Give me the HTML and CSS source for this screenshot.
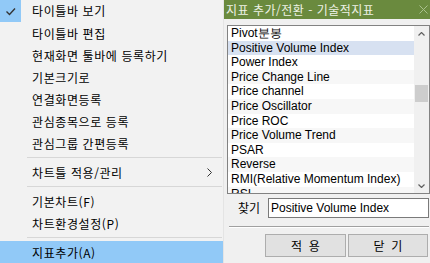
FILE: index.html
```html
<!DOCTYPE html>
<html lang="ko">
<head>
  <meta charset="UTF-8">
  <title>지표 추가/전환</title>
  <link rel="stylesheet" href="styles.css">
</head>
<body>

  <div class="menu">
    <div class="menu-item checked">
      <span class="check-box">
        <svg width="21" height="22" viewBox="0 0 21 22"><polyline points="6.5,11.5 9.5,14.5 15,8.5" fill="none" stroke="#333" stroke-width="1.4"/></svg>
      </span>
      타이틀바 보기
    </div>
    <div class="menu-item">타이틀바 편집</div>
    <div class="menu-item">현재화면 툴바에 등록하기</div>
    <div class="menu-item">기본크기로</div>
    <div class="menu-item">연결화면등록</div>
    <div class="menu-item">관심종목으로 등록</div>
    <div class="menu-item">관심그룹 간편등록</div>
    <div class="menu-sep"></div>
    <div class="menu-item">
      차트틀 적용/관리
      <svg class="sub-arrow" width="5" height="9" viewBox="0 0 5 9"><polyline points="0.5,0.5 4.5,4.5 0.5,8.5" fill="none" stroke="#333" stroke-width="1"/></svg>
    </div>
    <div class="menu-sep"></div>
    <div class="menu-item">기본차트(F)</div>
    <div class="menu-item">차트환경설정(P)</div>
    <div class="menu-sep"></div>
    <div class="menu-item active">지표추가(A)</div>
  </div>

  <div class="dialog">
    <div class="title-bar">
      <span class="title">지표 추가/전환 - 기술적지표</span>
      <svg class="close" width="9" height="9" viewBox="0 0 9 9"><path d="M0.5 0.5 L8.5 8.5 M8.5 0.5 L0.5 8.5" stroke="#a9c08c" stroke-width="1"/></svg>
    </div>

    <div class="dialog-body">
      <div class="listbox">
        <ul class="list">
          <li>Pivot분봉</li>
          <li class="selected">Positive Volume Index</li>
          <li>Power Index</li>
          <li>Price Change Line</li>
          <li>Price channel</li>
          <li>Price Oscillator</li>
          <li>Price ROC</li>
          <li>Price Volume Trend</li>
          <li>PSAR</li>
          <li>Reverse</li>
          <li>RMI(Relative Momentum Index)</li>
          <li>RSI</li>
        </ul>
        <div class="scrollbar">
          <div class="scroll-btn">
            <svg width="7" height="4" viewBox="0 0 7 4"><polyline points="0.5,3.5 3.5,0.5 6.5,3.5" fill="none" stroke="#606060" stroke-width="1.2"/></svg>
          </div>
          <div class="scroll-track"><div class="scroll-thumb"></div></div>
          <div class="scroll-btn">
            <svg width="7" height="4" viewBox="0 0 7 4"><polyline points="0.5,0.5 3.5,3.5 6.5,0.5" fill="none" stroke="#606060" stroke-width="1.2"/></svg>
          </div>
        </div>
      </div>

      <div class="search-row">
        <label class="search-label" for="search">찾기</label>
        <input class="search-input" id="search" type="text" value="Positive Volume Index">
      </div>

      <div class="divider"></div>

      <div class="buttons">
        <button class="btn btn-apply">적&nbsp;&nbsp;용</button>
        <button class="btn btn-close">닫&nbsp;&nbsp;기</button>
      </div>
    </div>
  </div>

</body>
</html>
```

FILE: styles.css
```css
* {
  box-sizing: border-box;
}

body {
  margin: 0;
  height: 263px;
  display: flex;
  background: #f0f0f0;
  font-family: "Noto Sans CJK KR", sans-serif;
  font-size: 12px;
  color: #000;
  overflow: hidden;
}

/* context menu */
.menu {
  width: 224px;
  flex-shrink: 0;
  display: flex;
  flex-direction: column;
  background: #f2f2f2;
  border-right: 1px solid #e4e4e4;
}

.menu-item {
  height: 22px;
  display: flex;
  align-items: center;
  padding-left: 32px;
  padding-top: 1px;
  line-height: 1;
  letter-spacing: 0.6px;
  white-space: nowrap;
}

.menu-item.checked {
  padding-left: 0;
  padding-top: 0;
}

.check-box {
  width: 21px;
  height: 22px;
  margin-right: 11px;
  background: #91c9f7;
  display: flex;
}

.menu-item.active {
  background: #91c9f7;
}

.sub-arrow {
  margin-left: auto;
  margin-right: 11px;
}

.menu-sep {
  height: 1px;
  margin: 3px 1px 3px 27px;
  background: #d7d7d7;
}

/* dialog */
.dialog {
  flex: 1;
  display: flex;
  flex-direction: column;
}

.title-bar {
  height: 19px;
  display: flex;
  align-items: center;
  justify-content: space-between;
  padding: 0 6px 0 2px;
  background: #6a8a3e;
  color: #eef2e6;
  line-height: 1;
  letter-spacing: 0.5px;
}

.dialog-body {
  padding: 6px 4px 0 3px;
}

.listbox {
  height: 169px;
  display: flex;
  border: 1px solid #828282;
  background: #fff;
}

.list {
  flex: 1;
  margin: 0;
  padding: 0;
  list-style: none;
  overflow: hidden;
}

.list li {
  height: 14.6px;
  line-height: 14.6px;
  padding-left: 3px;
  font-family: "Liberation Sans", sans-serif;
  font-size: 12px;
  white-space: nowrap;
}

.list li:nth-child(even) {
  background: #f7f7f7;
}

.list li.selected {
  background: #d7e1f1;
}

.scrollbar {
  width: 15px;
  display: flex;
  flex-direction: column;
  background: #f0f0f0;
}

.scroll-btn {
  height: 15px;
  display: flex;
  align-items: center;
  justify-content: center;
}

.scroll-track {
  flex: 1;
}

.scroll-thumb {
  height: 17px;
  margin: 44px 1px 0;
  background: #cdcdcd;
}

.search-row {
  height: 20px;
  margin-top: 4px;
  display: flex;
  align-items: center;
}

.search-label {
  width: 41px;
  padding-left: 11px;
  line-height: 1;
}

.search-input {
  flex: 1;
  height: 20px;
  margin: 0 1px 0 0;
  padding: 0 2px;
  border: 1px solid #7a7a7a;
  background: #fff;
  font-family: "Liberation Sans", sans-serif;
  font-size: 12px;
  color: #000;
  outline: none;
}

.divider {
  height: 2px;
  margin: 8px 1px 0 2px;
  border-top: 1px solid #a0a0a0;
  border-bottom: 1px solid #fff;
}

.buttons {
  display: flex;
  justify-content: flex-end;
  gap: 2px;
  margin: 6px 2px 0 0;
}

.btn {
  height: 23px;
  padding: 0;
  border: 1px solid #adadad;
  background: #e1e1e1;
  font-family: "Noto Sans CJK KR", sans-serif;
  font-size: 12px;
  color: #000;
  line-height: 1;
}

.btn-apply {
  width: 81px;
}

.btn-close {
  width: 80px;
}
```
